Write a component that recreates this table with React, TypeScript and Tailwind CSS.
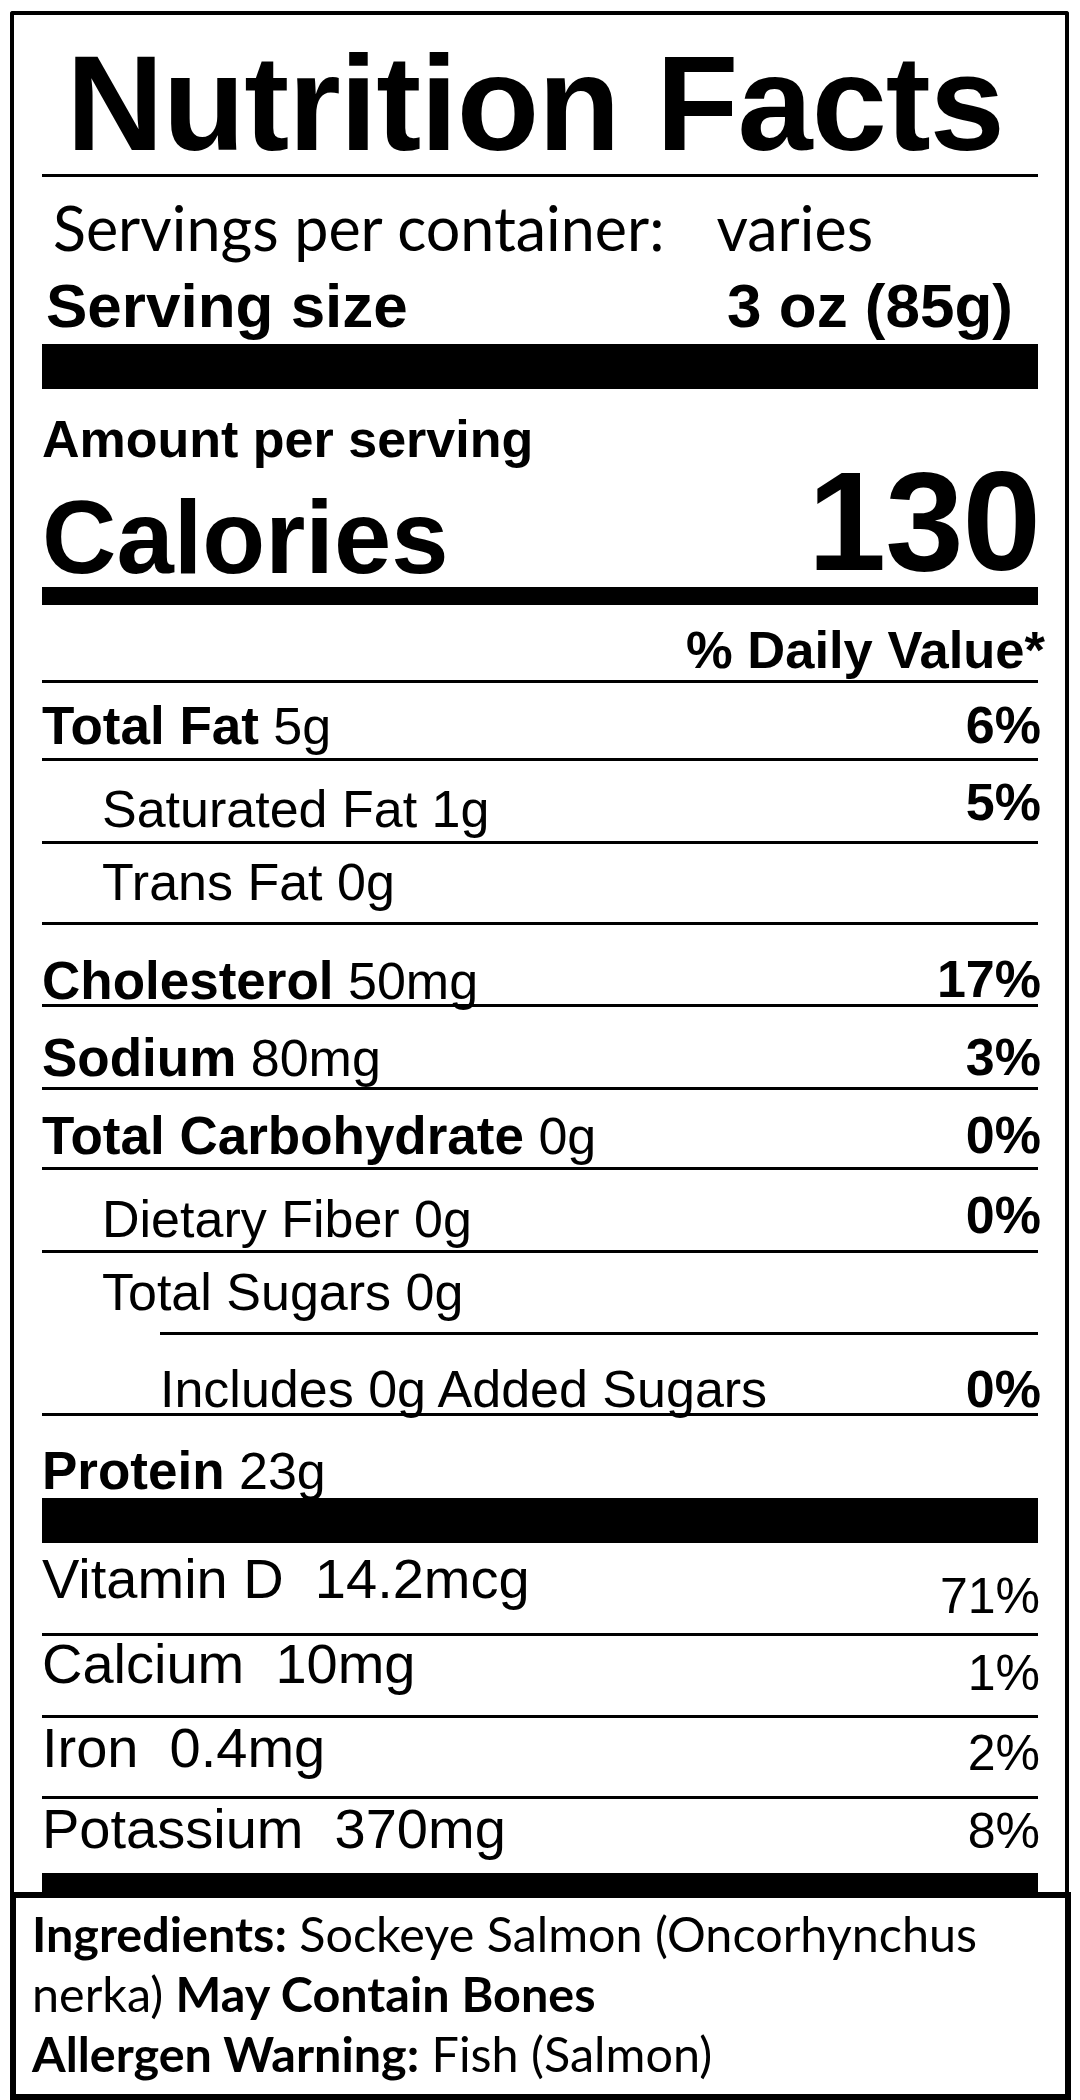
import React from "react";

const SANS = "font-['Liberation_Sans',Arial,sans-serif]";
const LATO = "font-['Lato','Noto_Sans',sans-serif]";

type NutProps = {
  label: React.ReactNode;
  pct?: string;
  h: string;
  lpt: string;
  rpt?: string;
  indent?: string;
  border?: boolean;
};

function NutRow({ label, pct, h, lpt, rpt = "", indent = "", border = true }: NutProps) {
  return (
    <div className={`flex justify-between ${h} ${border ? "border-b-[3px] border-black" : ""}`}>
      <div className={`${indent} ${lpt} text-[52px] leading-none whitespace-nowrap`}>{label}</div>
      {pct ? (
        <div className={`${rpt} text-[52px] leading-none font-bold -mr-[3px]`}>{pct}</div>
      ) : null}
    </div>
  );
}

function B({ children }: { children: React.ReactNode }) {
  return <b className="text-[53px] font-bold">{children}</b>;
}

type VitProps = {
  label: string;
  pct: string;
  h: string;
  lpt: string;
  rpt: string;
  border?: boolean;
};

function VitRow({ label, pct, h, lpt, rpt, border = true }: VitProps) {
  return (
    <div className={`flex justify-between ${h} ${border ? "border-b-[3px] border-black" : ""}`}>
      <div className={`${lpt} text-[56px] leading-none whitespace-pre`}>{label}</div>
      <div className={`${rpt} text-[50px] leading-none -mr-[2px]`}>{pct}</div>
    </div>
  );
}

export default function App() {
  return (
    <div className={`w-[1080px] h-[2100px] bg-white text-black overflow-hidden ${SANS}`}>
      <div className="ml-[10px] mt-[11px] w-[1059px] border-x-[4px] border-t-[4px] border-black rounded-t-[3px] pl-[28px] pr-[27px]">
        {/* Title */}
        <div className="h-[162px] pt-[21px] pr-[10px] border-b-[3px] border-black">
          <h1 className="text-[135px] leading-none font-bold text-center tracking-[-1px] whitespace-nowrap">
            Nutrition Facts
          </h1>
        </div>

        {/* Servings */}
        <div className="h-[167px]">
          <div className={`${LATO} pt-[20px] pl-[11px] text-[61px] leading-none whitespace-nowrap`}>
            Servings per container:<span className="ml-[52px]">varies</span>
          </div>
          <div className="mt-[17px] pl-[4px] pr-[25px] flex justify-between text-[62px] leading-none font-bold">
            <span>Serving size</span>
            <span>3 oz (85g)</span>
          </div>
        </div>

        <div className="h-[45px] bg-black" />

        {/* Calories */}
        <div className="h-[198px] flex justify-between items-start">
          <div>
            <div className="pt-[24px] text-[52px] leading-none font-bold">Amount per serving</div>
            <div className="mt-[21px] text-[103px] leading-none font-bold">Calories</div>
          </div>
          <div className="pt-[62px] text-[141px] leading-none font-bold tracking-[-1px] -mr-[2px]">130</div>
        </div>

        <div className="h-[18px] bg-black" />

        <div className="h-[78px] pt-[19px] border-b-[3px] border-black text-right">
          <span className="inline-block text-[52.5px] leading-none font-bold -mr-[7px]">% Daily Value*</span>
        </div>

        <NutRow
          h="h-[78px]"
          lpt="pt-[16px]"
          rpt="pt-[16px]"
          pct="6%"
          label={<><B>Total Fat</B> 5g</>}
        />
        <NutRow
          h="h-[83px]"
          lpt="pt-[22px]"
          rpt="pt-[15px]"
          indent="pl-[60px]"
          pct="5%"
          label="Saturated Fat 1g"
        />
        <NutRow h="h-[81px]" lpt="pt-[12px]" indent="pl-[60px]" label="Trans Fat 0g" />
        <NutRow
          h="h-[82px]"
          lpt="pt-[29px]"
          rpt="pt-[28px]"
          pct="17%"
          label={<><B>Cholesterol</B> 50mg</>}
        />
        <NutRow
          h="h-[83px]"
          lpt="pt-[24px]"
          rpt="pt-[24px]"
          pct="3%"
          label={<><B>Sodium</B> 80mg</>}
        />
        <NutRow
          h="h-[80px]"
          lpt="pt-[19px]"
          rpt="pt-[19px]"
          pct="0%"
          label={<><B>Total Carbohydrate</B> 0g</>}
        />
        <NutRow
          h="h-[83px]"
          lpt="pt-[23px]"
          rpt="pt-[19px]"
          indent="pl-[60px]"
          pct="0%"
          label="Dietary Fiber 0g"
        />
        <div className="h-[82px]">
          <NutRow h="h-[79px]" lpt="pt-[13px]" indent="pl-[60px]" border={false} label="Total Sugars 0g" />
          <div className="ml-[118px] h-[3px] bg-black" />
        </div>
        <NutRow
          h="h-[81px]"
          lpt="pt-[28px]"
          rpt="pt-[28px]"
          indent="pl-[118px]"
          pct="0%"
          label="Includes 0g Added Sugars"
        />
        <NutRow h="h-[82px]" lpt="pt-[28px]" border={false} label={<><B>Protein</B> 23g</>} />

        <div className="h-[45px] bg-black" />

        <VitRow h="h-[93px]" lpt="pt-[8px]" rpt="pt-[28px]" label="Vitamin D  14.2mcg" pct="71%" />
        <VitRow h="h-[82px]" lpt="pt-[0px]" rpt="pt-[12px]" label="Calcium  10mg" pct="1%" />
        <VitRow h="h-[81px]" lpt="pt-[2px]" rpt="pt-[10px]" label="Iron  0.4mg" pct="2%" />
        <VitRow h="h-[74px]" lpt="pt-[2px]" rpt="pt-[7px]" border={false} label="Potassium  370mg" pct="8%" />

        <div className="h-[19px] bg-black" />
      </div>

      {/* Ingredients */}
      <div className={`ml-[10px] w-[1061px] h-[208px] border-[6px] border-black pl-[16px] pt-[5px] ${LATO} text-[48.5px] leading-[60px]`}>
        <p className="whitespace-nowrap">
          <span className="font-bold">Ingredients:</span> Sockeye Salmon (Oncorhynchus
        </p>
        <p className="whitespace-nowrap">
          nerka) <span className="font-bold">May Contain Bones</span>
        </p>
        <p className="whitespace-nowrap">
          <span className="font-bold">Allergen Warning:</span> Fish (Salmon)
        </p>
      </div>
    </div>
  );
}
